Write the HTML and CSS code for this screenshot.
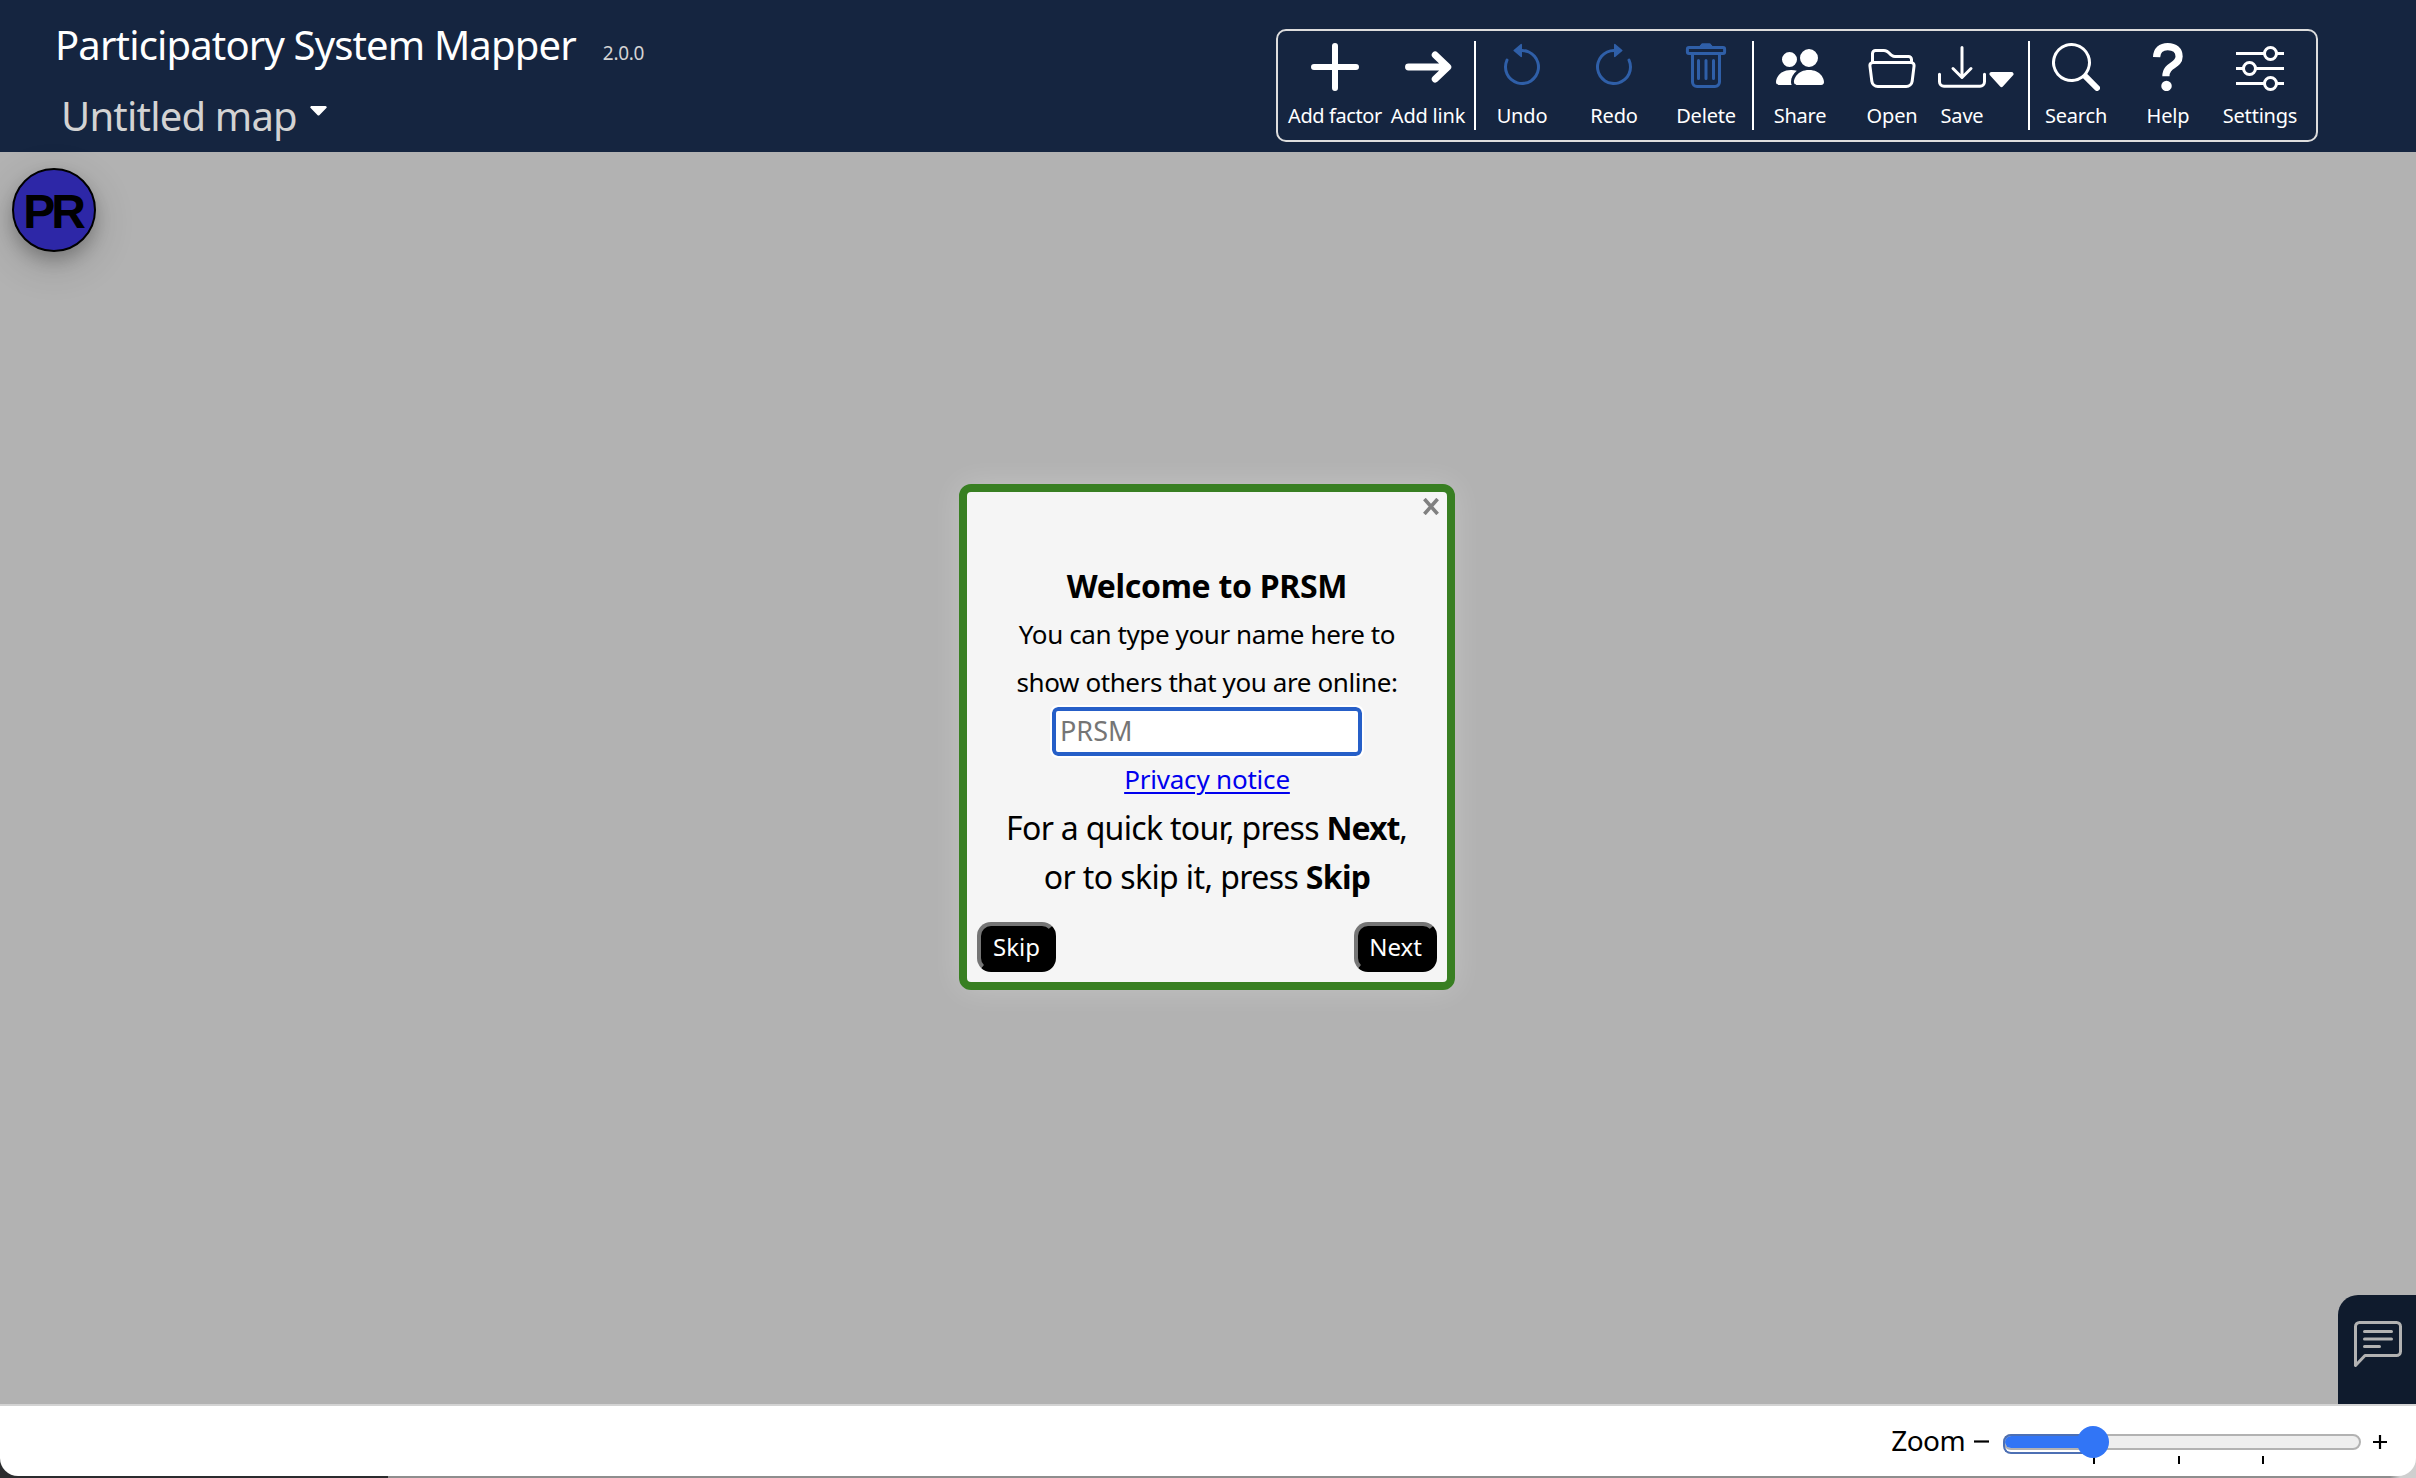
FILE: index.html
```
<!DOCTYPE html>
<html lang="en">
<head>
<meta charset="utf-8">
<title>Participatory System Mapper</title>
<link rel="stylesheet" href="styles.css">
</head>
<body>
<header class="header">
  <div class="titles">
    <div class="title-row"><h1 class="title">Participatory System Mapper</h1><span class="version">2.0.0</span></div>
    <div class="map-row"><span class="map-name">Untitled map</span>
      <svg class="map-caret" viewBox="2 4 12 8" preserveAspectRatio="none"><path d="M7.247 11.14 2.451 5.658C1.885 5.013 2.345 4 3.204 4h9.592a1 1 0 0 1 .753 1.659l-4.796 5.48a1 1 0 0 1-1.506 0z"/></svg>
    </div>
  </div>
  <nav class="toolbar">
    <div class="tool tool-factor"><svg class="icon line heavy" viewBox="0 0 16 16"><path d="M8 1v14M1 8h14"/></svg><span>Add factor</span></div>
    <div class="tool tool-link"><svg class="icon line arrow" viewBox="0 0 16 16"><path d="M1.5 8H14M10.4 4l4.2 4-4.2 4"/></svg><span>Add link</span></div>
    <div class="sep"></div>
    <div class="tool"><svg class="icon off" viewBox="0 0 16 16"><path d="M8 3a5 5 0 1 1-4.546 2.914.5.5 0 0 0-.908-.417A6 6 0 1 0 8 2z"/><path d="M8 4.466V.534a.25.25 0 0 0-.41-.192L5.23 2.308a.25.25 0 0 0 0 .384l2.36 1.966A.25.25 0 0 0 8 4.466"/></svg><span>Undo</span></div>
    <div class="tool"><svg class="icon off" viewBox="0 0 16 16"><path d="M8 3a5 5 0 1 0 4.546 2.914.5.5 0 0 1 .908-.417A6 6 0 1 1 8 2z"/><path d="M8 4.466V.534a.25.25 0 0 1 .41-.192l2.36 1.966c.12.1.12.284 0 .384L8.41 4.658A.25.25 0 0 1 8 4.466"/></svg><span>Redo</span></div>
    <div class="tool"><svg class="icon off line" viewBox="0 0 16 16"><rect x="1.8" y="1.5" width="12.4" height="2" rx=".5"/><path d="M3.5 3.6v9.4a1.5 1.5 0 0 0 1.5 1.5h6a1.5 1.5 0 0 0 1.5-1.5V3.6M5.5 5.8v6M8 5.8v6M10.5 5.8v6M6.8 .6h2.4M6.4 1h3.2"/></svg><span>Delete</span></div>
    <div class="sep"></div>
    <div class="tool"><svg class="icon" viewBox="0 0 16 16"><path d="M7 14s-1 0-1-1 1-4 5-4 5 3 5 4-1 1-1 1zm4-6a3 3 0 1 0 0-6 3 3 0 0 0 0 6m-5.784 6A2.24 2.24 0 0 1 5 13c0-1.355.68-2.75 1.936-3.72A6.3 6.3 0 0 0 5 9c-4 0-5 3-5 4s1 1 1 1zM4.5 8a2.5 2.5 0 1 0 0-5 2.5 2.5 0 0 0 0 5"/></svg><span>Share</span></div>
    <div class="tool"><svg class="icon" viewBox="0 0 16 16"><path d="M1 3.5A1.5 1.5 0 0 1 2.5 2h2.764c.958 0 1.76.56 2.311 1.184C7.985 3.648 8.48 4 9 4h4.5A1.5 1.5 0 0 1 15 5.5v.64c.57.265.94.876.856 1.546l-.64 5.124A2.5 2.5 0 0 1 12.733 15H3.266a2.5 2.5 0 0 1-2.481-2.19l-.64-5.124A1.5 1.5 0 0 1 1 6.14zM2 6h12v-.5a.5.5 0 0 0-.5-.5H9c-.964 0-1.71-.629-2.174-1.154C6.374 3.334 5.82 3 5.264 3H2.5a.5.5 0 0 0-.5.5zm-.367 1a.5.5 0 0 0-.496.562l.64 5.124A1.5 1.5 0 0 0 3.266 14h9.468a1.5 1.5 0 0 0 1.489-1.314l.64-5.124A.5.5 0 0 0 14.367 7z"/></svg><span>Open</span></div>
    <div class="save">
      <div class="tool tool-save"><svg class="icon" viewBox="0 0 16 16"><path d="M.5 9.9a.5.5 0 0 1 .5.5v2.5a1 1 0 0 0 1 1h12a1 1 0 0 0 1-1v-2.5a.5.5 0 0 1 1 0v2.5a2 2 0 0 1-2 2H2a2 2 0 0 1-2-2v-2.5a.5.5 0 0 1 .5-.5"/><path d="M7.646 11.854a.5.5 0 0 0 .708 0l3-3a.5.5 0 0 0-.708-.708L8.5 10.293V1.5a.5.5 0 0 0-1 0v8.793L5.354 8.146a.5.5 0 1 0-.708.708z"/></svg><span>Save</span></div>
      <svg class="save-caret" viewBox="2 4 12 8" preserveAspectRatio="none"><path d="M7.247 11.14 2.451 5.658C1.885 5.013 2.345 4 3.204 4h9.592a1 1 0 0 1 .753 1.659l-4.796 5.48a1 1 0 0 1-1.506 0z"/></svg>
    </div>
    <div class="sep"></div>
    <div class="tool"><svg class="icon" viewBox="0 0 16 16"><path d="M11.742 10.344a6.5 6.5 0 1 0-1.397 1.398h-.001q.044.06.098.115l3.85 3.85a1 1 0 0 0 1.415-1.414l-3.85-3.85a1 1 0 0 0-.115-.1zM12 6.5a5.5 5.5 0 1 1-11 0 5.5 5.5 0 0 1 11 0"/></svg><span>Search</span></div>
    <div class="tool"><svg class="icon line question" viewBox="0 0 16 16"><path d="M4.2 4.7C4.3 2.4 5.7 1.2 7.9 1.2c2.4 0 3.8 1.3 3.8 3.3C11.7 7.7 7.3 7.1 7.3 11.1"/><circle class="solid" cx="7.5" cy="14.3" r="1.75"/></svg><span>Help</span></div>
    <div class="tool"><svg class="icon line flat" viewBox="0 0 16 16"><circle cx="11.5" cy="3.5" r="2"/><circle cx="4.5" cy="8.5" r="2"/><circle cx="11.5" cy="13.5" r="2"/><path d="M0 3.5h9.5M13.5 3.5H16M0 8.5h2.5M6.5 8.5H16M0 13.5h9.5M13.5 13.5H16"/></svg><span>Settings</span></div>
  </nav>
</header>
<main class="canvas">
  <div class="avatar">PR</div>
  <section class="dialog">
    <button class="close" aria-label="Close"><svg viewBox="0 0 16 17"><path d="M1.4 1l13.2 15M14.6 1L1.4 16"/></svg></button>
    <h2 class="welcome">Welcome to PRSM</h2>
    <p class="prompt">You can type your name here to<br>show others that you are online:</p>
    <input class="name" placeholder="PRSM">
    <a class="privacy" href="#">Privacy notice</a>
    <p class="tour"><span class="tour-a">For a quick tour, press </span><b class="next-word">Next</b>,<br><span class="tour-b">or to skip it, press </span><b class="skip-word">Skip</b></p>
    <div class="buttons"><button class="btn skip">Skip</button><button class="btn next">Next</button></div>
  </section>
  <div class="chat-tab"><svg viewBox="0 0 48 48"><path d="M1.5 44.500V5.500a4 4 0 0 1 4-4h37a4 4 0 0 1 4 4v25a4 4 0 0 1-4 4H11z"/><path d="M10.500 10.500h27M10.500 18h27M10.500 25.500h15"/></svg></div>
</main>
<footer class="footer">
  <span class="zoom-label">Zoom</span>
  <svg class="minus" viewBox="0 0 15 15"><path d="M0 7.500h15"/></svg>
  <div class="slider"><div class="track"><div class="fill"></div></div><div class="thumb"></div><div class="ticks"><i></i><i></i><i></i></div></div>
  <svg class="plus" viewBox="0 0 14 14"><path d="M0 7h14M7 0v14"/></svg>
</footer>
</body>
</html>
```
FILE: styles.css
```
* { box-sizing: border-box; }
body {
  margin: 0;
  height: 1478px;
  display: flex;
  flex-direction: column;
  overflow: hidden;
  font-family: "Noto Sans", "Open Sans", sans-serif;
  color: #000;
  background: linear-gradient(to right, #2b2c2e 388px, #8e8e8e 388px, #8e8e8e 2390px, #cfcfcf 2400px);
}
h1, h2, p { margin: 0; }

.header {
  height: 152px;
  flex: none;
  display: flex;
  justify-content: space-between;
  padding: 0 98px 0 55px;
  background: #152540;
  color: #fff;
}
.titles { padding-top: 16px; }
.title-row { display: flex; align-items: baseline; gap: 27px; height: 58px; }
.title { font-size: 40px; font-weight: 400; letter-spacing: -.85px; line-height: 58px; }
.version { font-size: 19px; letter-spacing: -.3px; color: #d3d3d3; }
.map-row { display: flex; padding: 13px 0 0 6px; gap: 13px; line-height: 58px; }
.map-name { font-size: 40px; letter-spacing: -.8px; color: #d3d3d3; }
.map-caret { width: 17px; height: 10px; margin-top: 19px; fill: #fff; }

.toolbar {
  display: flex;
  width: 1042px;
  height: 113px;
  margin-top: 29px;
  padding: 10px 8px 0 10px;
  border: 2px solid #ddd;
  border-radius: 10px;
}
.sep { width: 2px; height: 89px; background: #fff; }
.tool {
  width: 92px;
  padding-top: 2px;
  display: flex;
  flex-direction: column;
  align-items: center;
  gap: 11px;
  font-size: 20px;
  line-height: 28px;
  letter-spacing: -.2px;
  white-space: nowrap;
}
.tool-factor { width: 94px; letter-spacing: -.4px; }
.tool-save { width: 48px; }
.save { width: 90px; display: flex; gap: 3px; }
.save-caret { width: 25px; height: 16px; margin-top: 31px; fill: #fff; }
.icon { width: 48px; height: 48px; fill: #fff; }
.off { fill: #2f5fa8; }
.line { fill: none; stroke: #fff; stroke-width: 1; stroke-linecap: round; stroke-linejoin: round; }
.line.off { stroke: #2f5fa8; }
.heavy { stroke-width: 2; }
.arrow { stroke-width: 2.3; }
.question { stroke-width: 2.4; stroke-linecap: butt; }
.flat { stroke-linecap: butt; }
.solid { fill: #fff; stroke: none; }

.canvas { position: relative; flex: 1; background: #b2b2b2; }
.avatar {
  position: absolute;
  left: 12px;
  top: 16px;
  width: 84px;
  height: 84px;
  border: 2px solid #000;
  border-radius: 50%;
  background: #2d27a7;
  box-shadow: 0 8px 16px rgba(0,0,0,.2), 0 12px 40px rgba(0,0,0,.19);
  font: bold 48px/84px "Liberation Sans", sans-serif;
  letter-spacing: -4px;
  text-align: center;
  text-indent: -3px;
}
.dialog {
  position: absolute;
  left: 959px;
  top: 332px;
  width: 496px;
  height: 506px;
  padding: 70px 10px 0;
  border: 8px solid #387f22;
  border-radius: 12px;
  background: #f5f5f5;
  box-shadow: 0 0 30px rgba(255,255,255,.22);
  text-align: center;
  display: flex;
  flex-direction: column;
  align-items: center;
}
.close { position: absolute; right: 8px; top: 6px; width: 16px; height: 17px; padding: 0; border: 0; background: none; }
.close svg { display: block; width: 16px; height: 17px; stroke: gray; stroke-width: 3.6; }
.welcome { font-size: 32px; line-height: 48px; letter-spacing: -.3px; }
.prompt { font-size: 26px; line-height: 48px; letter-spacing: -.4px; white-space: nowrap; }
.name {
  flex: none;
  width: 310px;
  height: 49px;
  margin: 1px 0 -1px;
  padding: 0 0 2px 4px;
  border: 4px solid #265fc8;
  border-radius: 6px;
  outline: 2px solid #fff;
  background: #fff;
  font: 27px "Noto Sans", sans-serif;
}
.name::placeholder { color: #757575; }
.privacy { font-size: 26px; line-height: 48px; color: #00e; letter-spacing: -.2px; text-underline-offset: 3px; text-decoration-thickness: 2px; }
.tour { font-size: 32px; line-height: 49px; white-space: nowrap; }
.tour-a { letter-spacing: -.7px; }
.tour-b { letter-spacing: -.6px; }
.next-word { letter-spacing: -1px; }
.skip-word { letter-spacing: -.7px; }
.buttons { align-self: stretch; display: flex; justify-content: space-between; margin-top: 21px; }
.btn {
  height: 50px;
  padding: 0 0 2px;
  border: 4px outset #000;
  border-color: #757575 #222 #222 #757575;
  border-radius: 14px;
  background: #000;
  color: #fff;
  font: 24px "Noto Sans", sans-serif;
}
.skip { width: 79px; }
.next { width: 83px; }
.chat-tab {
  position: absolute;
  right: 0;
  bottom: 0;
  width: 78px;
  height: 109px;
  padding: 26px 0 0 16px;
  border-radius: 20px 0 0 0;
  background: #0f1b2d;
}
.chat-tab svg { display: block; width: 48px; height: 48px; fill: none; stroke: #b2b2b2; stroke-width: 3; stroke-linecap: round; stroke-linejoin: round; }

.footer {
  height: 72px;
  flex: none;
  margin-bottom: 2px;
  padding: 2px 29px 0 0;
  display: flex;
  align-items: center;
  justify-content: flex-end;
  border-top: 2px solid #d3d3d3;
  border-radius: 0 0 18px 18px;
  background: #fff;
}
.zoom-label { font-size: 28px; letter-spacing: -.6px; margin: 0 9px 4px 0; line-height: 40px; }
.minus { width: 15px; height: 15px; margin: 0 14px 1px 0; stroke: #000; stroke-width: 2.2; }
.plus { width: 14px; height: 14px; margin: 0 0 1px 12px; stroke: #000; stroke-width: 2.200; }
.slider { position: relative; width: 358px; height: 16px; }
.track { height: 16px; border: 2px solid #b2b2b2; border-radius: 8px; background: #eee; overflow: hidden; }
.fill { width: 90px; height: 12px; background: #3175f6; }
.thumb { position: absolute; left: 74px; top: -8px; width: 32px; height: 32px; border-radius: 50%; background: #3175f6; z-index: 1; }
.track::after { content: ""; position: absolute; left: 0; top: 0; width: 90px; height: 16px; border: 2px solid #4d70b4; border-right: 0; border-radius: 8px 0 0 8px; }
.ticks { position: absolute; left: 90px; top: 22px; width: 171px; display: flex; justify-content: space-between; }
.ticks i { width: 2px; height: 8px; background: #000; }
```
